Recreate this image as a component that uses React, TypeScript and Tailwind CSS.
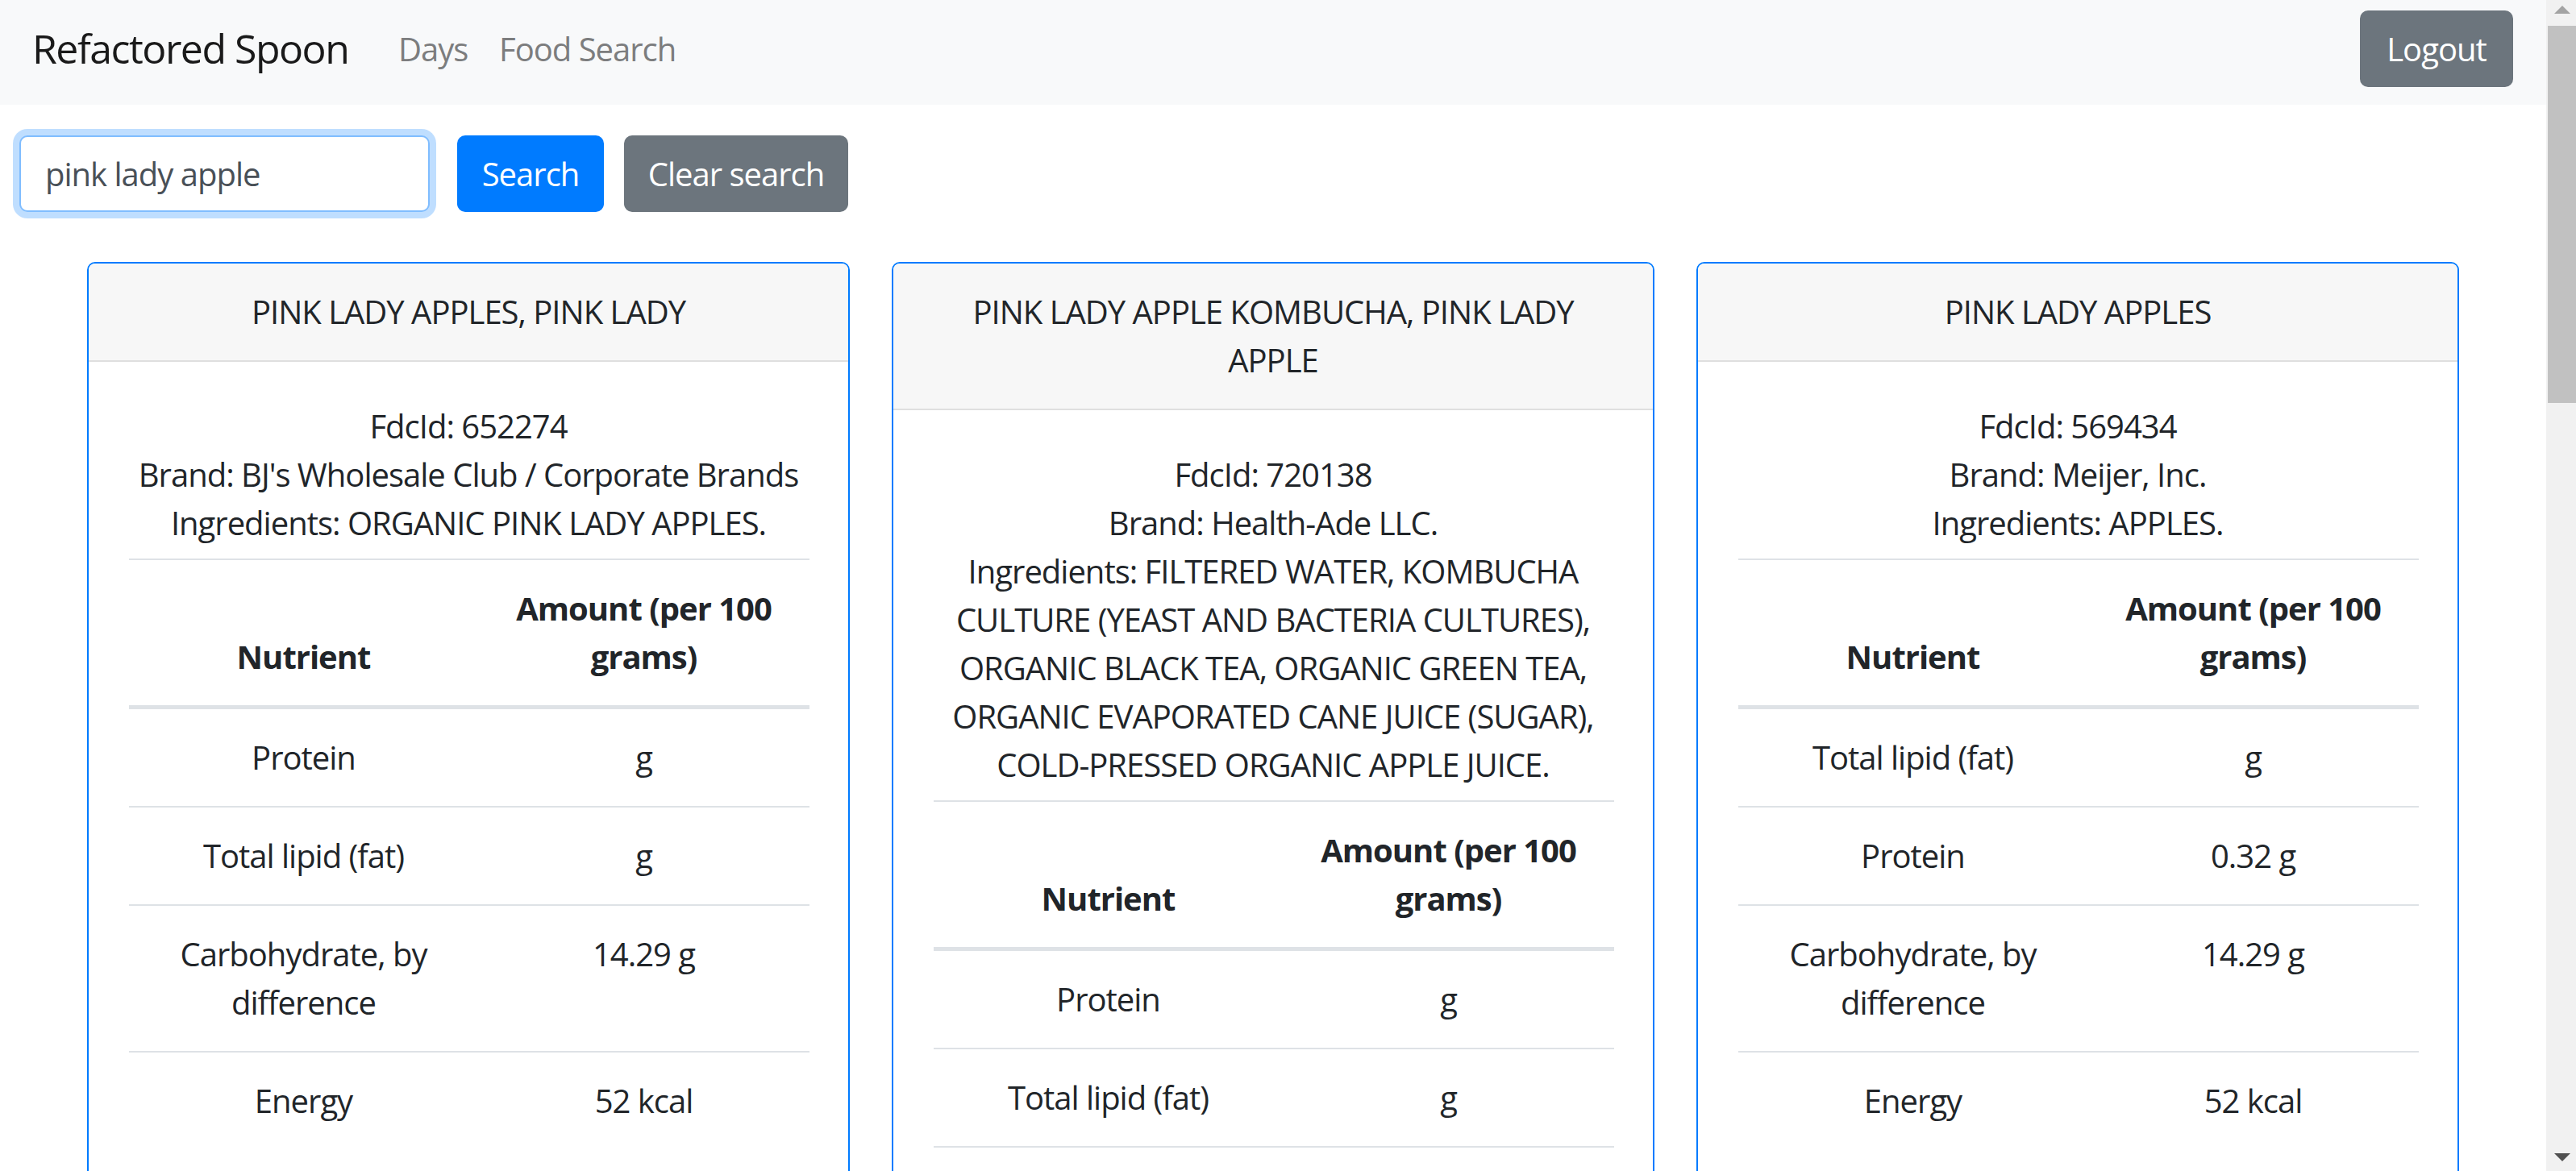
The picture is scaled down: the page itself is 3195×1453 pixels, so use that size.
import React from "react";

type Card = {
  title: React.ReactNode;
  fdc: string;
  brand: string;
  ingredients: React.ReactNode;
  rows: [React.ReactNode, React.ReactNode][];
};

const carb = (
  <>
    Carbohydrate, by
    <br />
    difference
  </>
);

const cards: Card[] = [
  {
    title: <>PINK LADY APPLES, PINK LADY</>,
    fdc: "652274",
    brand: "BJ's Wholesale Club / Corporate Brands",
    ingredients: <>Ingredients: ORGANIC PINK LADY APPLES.</>,
    rows: [
      ["Protein", "g"],
      ["Total lipid (fat)", "g"],
      [carb, "14.29 g"],
      ["Energy", "52 kcal"],
    ],
  },
  {
    title: (
      <>
        PINK LADY APPLE KOMBUCHA, PINK LADY
        <br />
        APPLE
      </>
    ),
    fdc: "720138",
    brand: "Health-Ade LLC.",
    ingredients: (
      <>
        Ingredients: FILTERED WATER, KOMBUCHA
        <br />
        CULTURE (YEAST AND BACTERIA CULTURES),
        <br />
        ORGANIC BLACK TEA, ORGANIC GREEN TEA,
        <br />
        ORGANIC EVAPORATED CANE JUICE (SUGAR),
        <br />
        COLD-PRESSED ORGANIC APPLE JUICE.
      </>
    ),
    rows: [
      ["Protein", "g"],
      ["Total lipid (fat)", "g"],
      [<>&nbsp;</>, <>&nbsp;</>],
    ],
  },
  {
    title: <>PINK LADY APPLES</>,
    fdc: "569434",
    brand: "Meijer, Inc.",
    ingredients: <>Ingredients: APPLES.</>,
    rows: [
      ["Total lipid (fat)", "g"],
      ["Protein", "0.32 g"],
      [carb, "14.29 g"],
      ["Energy", "52 kcal"],
    ],
  },
];

function FoodCard({ card }: { card: Card }) {
  return (
    <div className="w-[946px] shrink-0 border-2 border-[#007bff] rounded-[10px] bg-white overflow-hidden">
      <div className="bg-[#f7f7f7] border-b-2 border-[#dfdfdf] px-[50px] py-[30px] text-center whitespace-nowrap">
        {card.title}
      </div>
      <div className="p-[50px]">
        <div className="text-center whitespace-nowrap mb-[14px]">
          <div>FdcId: {card.fdc}</div>
          <div>Brand: {card.brand}</div>
          <div>{card.ingredients}</div>
        </div>
        <table className="w-full table-fixed border-collapse">
          <thead>
            <tr>
              <th className="w-[433px] p-[30px] align-bottom font-bold text-center border-t-2 border-b-[5px] border-[#dee2e6]">
                Nutrient
              </th>
              <th className="w-[411px] p-[30px] align-bottom font-bold text-center border-t-2 border-b-[5px] border-[#dee2e6] whitespace-nowrap">
                Amount (per 100
                <br />
                grams)
              </th>
            </tr>
          </thead>
          <tbody>
            {card.rows.map((r, i) => (
              <tr key={i}>
                <td className="p-[30px] align-top text-center border-t-2 border-[#dee2e6] whitespace-nowrap">
                  {r[0]}
                </td>
                <td className="p-[30px] align-top text-center border-t-2 border-[#dee2e6] whitespace-nowrap">
                  {r[1]}
                </td>
              </tr>
            ))}
          </tbody>
        </table>
      </div>
    </div>
  );
}

function Scrollbar() {
  return (
    <div className="w-[37px] h-full bg-[#f1f1f1] flex flex-col shrink-0">
      <div className="h-[32px] flex justify-center pt-[7px] pl-[2px]">
        <svg width="20" height="10" viewBox="0 0 20 10">
          <polygon points="10,0 20,10 0,10" fill="#a3a3a3" />
        </svg>
      </div>
      <div className="h-[468px] ml-[2px] bg-[#c1c1c1]" />
      <div className="flex-1" />
      <div className="h-[32px] flex justify-center pt-[10px] pl-[2px]">
        <svg width="20" height="10" viewBox="0 0 20 10">
          <polygon points="0,0 20,0 10,10" fill="#505050" />
        </svg>
      </div>
    </div>
  );
}

export default function App() {
  return (
    <div className="w-[3195px] h-[1453px] overflow-hidden flex bg-white text-[#212529] font-['Open_Sans',sans-serif] text-[40px] leading-[60px] tracking-[-0.025em]">
      <div className="w-[3158px] h-full flex flex-col shrink-0">
        <nav className="h-[130px] bg-[#f8f9fa] flex items-center pl-[40px] pr-[41px] pb-[9px] shrink-0">
          <div className="w-[454px] text-[50px] leading-[75px] text-[#1a1a1a] whitespace-nowrap tracking-[-0.03em]">
            Refactored Spoon
          </div>
          <div className="w-[125px] text-[#7c7d7e] whitespace-nowrap">Days</div>
          <div className="text-[#7c7d7e] whitespace-nowrap">Food Search</div>
          <button className="ml-auto w-[190px] h-[95px] rounded-[10px] bg-[#6c757d] text-white leading-[60px]">
            Logout
          </button>
        </nav>
        <div className="flex items-center pl-[24px] mt-[38px] shrink-0">
          <input
            readOnly
            value="pink lady apple"
            className="w-[509px] h-[95px] border-2 border-[#80bdff] rounded-[10px] px-[30px] text-[#495057] outline-none shadow-[0_0_0_8px_rgba(0,123,255,0.25)] bg-white"
          />
          <button className="ml-[34px] w-[182px] h-[95px] rounded-[10px] bg-[#007bff] text-white">
            Search
          </button>
          <button className="ml-[25px] w-[278px] h-[95px] rounded-[10px] bg-[#6c757d] text-white">
            Clear search
          </button>
        </div>
        <div className="flex justify-center items-start gap-[52px] mt-[62px]">
          {cards.map((c, i) => (
            <FoodCard key={i} card={c} />
          ))}
        </div>
      </div>
      <Scrollbar />
    </div>
  );
}
